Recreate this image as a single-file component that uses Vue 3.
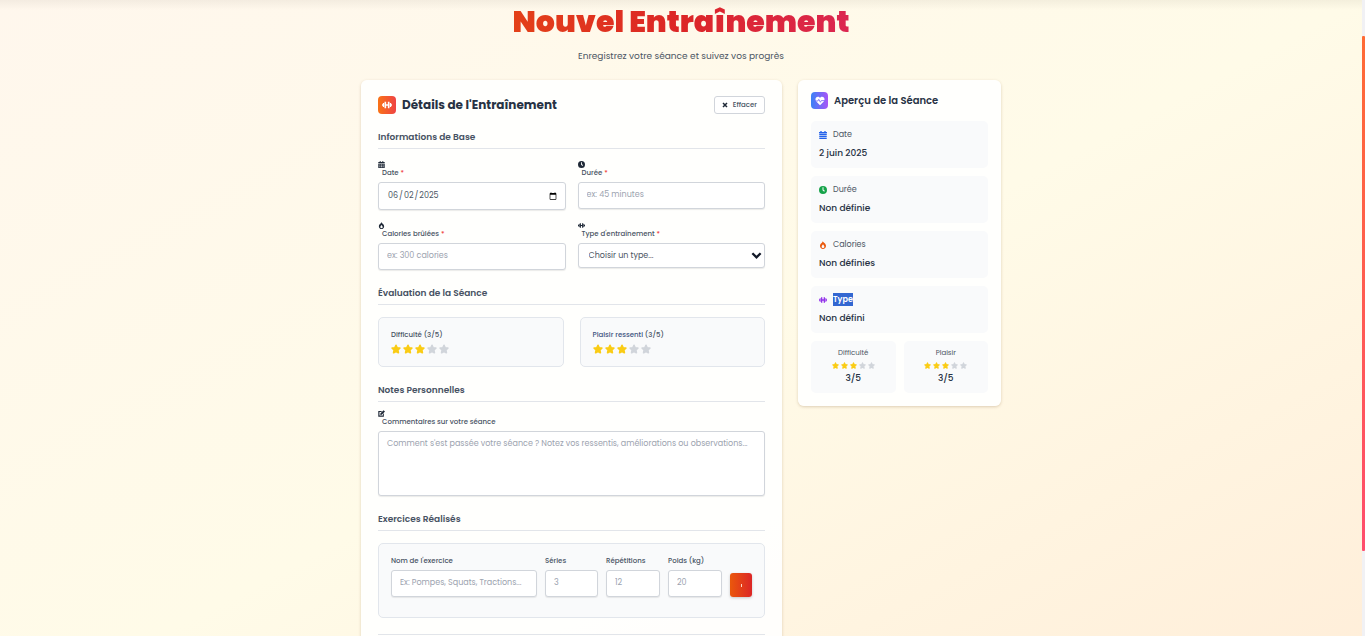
<script setup>
import { ref, computed, h } from 'vue'

const date = ref('2025-06-02')
const duration = ref('')
const calories = ref('')
const type = ref('')
const notes = ref('')
const difficulty = ref(3)
const pleasure = ref(3)
const exercise = ref({ name: '', sets: '', reps: '', weight: '' })

const shapes = {
  calendar: [
    ['path', { d: 'M6 0h3v4H6zM15 0h3v4h-3zM1 3h22v5H1z' }],
    ['path', { 'fill-rule': 'evenodd', d: 'M1 9.500h22V24H1zM5 12v3h3v-3zM10.500 12v3h3v-3zM16 12v3h3v-3zM5 18v3h3v-3zM10.500 18v3h3v-3zM16 18v3h3v-3z' }],
  ],
  agenda: [
    ['path', { d: 'M4 0h4v4H4zM16 0h4v4h-4zM0 3h24v4H0zM1 9h22v3H1zM1 15h22v3H1zM1 21h22v3H1z' }],
    ['path', { d: 'M1 6h22v17H1z', opacity: 0.4 }],
  ],
  clock: [
    ['path', { 'fill-rule': 'evenodd', d: 'M12 0a12 12 0 1 0 0 24 12 12 0 0 0 0-24zm-1.500 4h3v7l4 3-2 3-5-4z' }],
  ],
  flame: [
    ['path', { 'fill-rule': 'evenodd', d: 'M11 0c1 3 4 4 6 7 1 1 4 4 4 8 0 5-4 9-9 9s-9-4-9-9c0-4 2-7 5-9 2-2 3-3 3-6zm1 10c-2 3-4 4-4 7 0 3 2 4 4 4s4-1 4-4c0-3-2-4-4-7z' }],
  ],
  dumbbell: [
    ['path', { d: 'M0 10h2V7h3v10H2v-3H0zM6 4h4v6h4V4h4v16h-4v-6h-4v6H6zM19 7h3v3h2v4h-2v3h-3z' }],
  ],
  edit: [
    ['path', { d: 'M1 3h13l-3 4H5v12h12v-5l3-3v12H1zM8 12 19 1l5 4-11 11-5 1z' }],
  ],
  heart: [
    ['path', { d: 'M12 22 3 13C-1 8 2 2 7 2c2 0 4 1 5 3 1-2 3-3 5-3 5 0 8 6 4 11z' }],
    ['path', { d: 'M1 12h6l2-4 4 7 2-4h8', fill: 'none', stroke: '#776bf6', 'stroke-width': 2 }],
  ],
  star: [
    ['path', { d: 'm12 3 2.700 6 6.500.8-4.800 4.600 1.300 6.600L12 17.800 6.300 21l1.300-6.600-4.800-4.600L9.300 9z', stroke: 'currentColor', 'stroke-width': 4, 'stroke-linejoin': 'round' }],
  ],
  cross: [
    ['path', { d: 'M4 4l16 16M20 4 4 20', stroke: 'currentColor', 'stroke-width': 6 }],
  ],
  chevron: [
    ['path', { d: 'M3 7l9 9 9-9', fill: 'none', stroke: 'currentColor', 'stroke-width': 5 }],
  ],
}

const Icon = (props) =>
  h('svg', { viewBox: '0 0 24 24', fill: 'currentColor', 'aria-hidden': 'true' },
    shapes[props.name].map(([tag, attrs]) => h(tag, attrs)))
Icon.props = ['name']

const months = ['janvier', 'février', 'mars', 'avril', 'mai', 'juin', 'juillet', 'août', 'septembre', 'octobre', 'novembre', 'décembre']
const longDate = computed(() => {
  const [y, m, d] = date.value.split('-').map(Number)
  return y ? `${d} ${months[m - 1]} ${y}` : 'Non définie'
})

const preview = computed(() => [
  { icon: 'agenda', tone: 'blue', label: 'Date', value: longDate.value },
  { icon: 'clock', tone: 'green', label: 'Durée', value: duration.value || 'Non définie' },
  { icon: 'flame', tone: 'orange', label: 'Calories', value: calories.value || 'Non définies' },
  { icon: 'dumbbell', tone: 'purple', label: 'Type', value: type.value || 'Non défini', marked: true },
])

function clearForm() {
  duration.value = calories.value = type.value = notes.value = ''
  difficulty.value = pleasure.value = 3
}
</script>

<template>
  <div class="page">
    <main class="content">
      <header class="hero">
        <h1>Nouvel Entraînement</h1>
        <p>Enregistrez votre séance et suivez vos progrès</p>
      </header>

      <div class="columns">
        <form class="card form-card" @submit.prevent>
          <div class="form-head">
            <span class="badge badge-warm"><Icon name="dumbbell" /></span>
            <h2>Détails de l'Entraînement</h2>
            <button type="button" class="clear" @click="clearForm"><Icon name="cross" />Effacer</button>
          </div>

          <section>
            <h3>Informations de Base</h3>
            <div class="fields">
              <div class="field">
                <Icon name="calendar" class="label-icon" />
                <label for="date">Date <b>*</b></label>
                <input id="date" v-model="date" type="date" class="control date" />
              </div>
              <div class="field">
                <Icon name="clock" class="label-icon" />
                <label for="duration">Durée <b>*</b></label>
                <input id="duration" v-model="duration" type="text" class="control" placeholder="ex: 45 minutes" />
              </div>
              <div class="field">
                <Icon name="flame" class="label-icon" />
                <label for="calories">Calories brûlées <b>*</b></label>
                <input id="calories" v-model="calories" type="text" class="control" placeholder="ex: 300 calories" />
              </div>
              <div class="field">
                <Icon name="dumbbell" class="label-icon" />
                <label for="type">Type d'entraînement <b>*</b></label>
                <div class="select-wrap">
                  <select id="type" v-model="type" class="control">
                    <option value="">Choisir un type...</option>
                    <option>Cardio</option>
                    <option>Musculation</option>
                  </select>
                  <Icon name="chevron" class="chevron" />
                </div>
              </div>
            </div>
          </section>

          <section>
            <h3>Évaluation de la Séance</h3>
            <div class="ratings">
              <div class="panel rating">
                <p>Difficulté ({{ difficulty }}/5)</p>
                <div class="stars">
                  <button v-for="n in 5" :key="n" type="button" :class="{ on: n <= difficulty }" :aria-label="`Difficulté ${n}`" @click="difficulty = n"><Icon name="star" /></button>
                </div>
              </div>
              <div class="panel rating">
                <p><span class="tinted">Plaisir ressenti</span> ({{ pleasure }}/5)</p>
                <div class="stars">
                  <button v-for="n in 5" :key="n" type="button" :class="{ on: n <= pleasure }" :aria-label="`Plaisir ${n}`" @click="pleasure = n"><Icon name="star" /></button>
                </div>
              </div>
            </div>
          </section>

          <section class="notes">
            <h3>Notes Personnelles</h3>
            <div class="field">
              <Icon name="edit" class="label-icon" />
              <label for="notes">Commentaires sur votre séance</label>
              <textarea id="notes" v-model="notes" class="control" placeholder="Comment s'est passée votre séance ? Notez vos ressentis, améliorations ou observations..."></textarea>
            </div>
          </section>

          <section>
            <h3>Exercices Réalisés</h3>
            <div class="panel exercise">
              <div class="field">
                <label for="ex-name">Nom de l'exercice</label>
                <input id="ex-name" v-model="exercise.name" class="control" placeholder="Ex: Pompes, Squats, Tractions..." />
              </div>
              <div class="field">
                <label for="ex-sets">Séries</label>
                <input id="ex-sets" v-model="exercise.sets" class="control" placeholder="3" />
              </div>
              <div class="field">
                <label for="ex-reps">Répétitions</label>
                <input id="ex-reps" v-model="exercise.reps" class="control" placeholder="12" />
              </div>
              <div class="field">
                <label for="ex-weight">Poids (kg)</label>
                <input id="ex-weight" v-model="exercise.weight" class="control" placeholder="20" />
              </div>
              <button type="button" class="add" aria-label="Ajouter"><i></i></button>
            </div>
          </section>
          <hr />
        </form>

        <aside class="card preview">
          <div class="preview-head">
            <span class="badge badge-cool"><Icon name="heart" /></span>
            <h2>Aperçu de la Séance</h2>
          </div>
          <div v-for="item in preview" :key="item.label" class="tile">
            <p class="tile-label">
              <Icon :name="item.icon" :class="item.tone" />
              <mark v-if="item.marked">{{ item.label }}</mark>
              <span v-else>{{ item.label }}</span>
            </p>
            <p class="tile-value">{{ item.value }}</p>
          </div>
          <div class="scores">
            <div class="score">
              <p>Difficulté</p>
              <div class="mini"><Icon v-for="n in 5" :key="n" name="star" :class="{ on: n <= difficulty }" /></div>
              <strong>{{ difficulty }}/5</strong>
            </div>
            <div class="score">
              <p>Plaisir</p>
              <div class="mini"><Icon v-for="n in 5" :key="n" name="star" :class="{ on: n <= pleasure }" /></div>
              <strong>{{ pleasure }}/5</strong>
            </div>
          </div>
        </aside>
      </div>
    </main>
    <div class="scroll-track"><div class="scroll-thumb"></div></div>
  </div>
</template>

<style>
body { margin: 0; }
</style>

<style scoped>
* { box-sizing: border-box; }
h1, h2, h3, p { margin: 0; }
svg { display: block; flex: none; }
.page {
  display: flex;
  height: 100vh;
  overflow: hidden;
  font-family: Poppins, Inter, "Open Sans", sans-serif;
  color: #273244;
}
.content {
  flex: 1;
  min-width: 0;
  overflow: hidden;
  padding: 0 16px;
  background:
    linear-gradient(rgba(60, 50, 30, 0.06), rgba(60, 50, 30, 0)) top / 100% 10px no-repeat,
    linear-gradient(to bottom right, #fff7ed, #fffbe8 50%, #ffedd8) top / 100% 720px;
}
.hero { max-width: 640px; margin: 0 auto; padding-top: 4px; text-align: center; }
h1 {
  font-size: 30px;
  line-height: 36px;
  font-weight: 900;
  background: linear-gradient(to right, #ea580c, #dc2626 50%, #db2777);
  background-clip: text;
  color: transparent;
}
.hero p {
  margin-top: 8px;
  font-size: 9px;
  line-height: 16px;
  color: #4b5563;
}
.columns {
  display: grid;
  grid-template-columns: minmax(0, 1fr) 203px;
  align-items: start;
  gap: 16px;
  max-width: 640px;
  margin: 16px auto 0;
}
.card {
  border-radius: 6px;
  background: rgba(255, 255, 255, 0.9);
  box-shadow: 0 1px 3px rgba(120, 80, 30, 0.25);
}
.form-card { padding: 16px 17px 24px; }
.form-head, .preview-head { display: flex; align-items: center; gap: 6px; }
.badge {
  display: grid;
  place-items: center;
  width: 18px;
  height: 18px;
  border-radius: 4px;
  color: #fff;
}
.badge svg { width: 10px; height: 10px; }
.badge-warm { background: linear-gradient(to right, #f97316, #ef4444); }
.badge-cool { background: linear-gradient(to right, #3b82f6, #a855f7); }
h2 { font-weight: 700; font-size: 12px; line-height: 18px; }
.clear {
  display: flex;
  align-items: center;
  gap: 5px;
  height: 18px;
  margin-left: auto;
  padding: 0 7px;
  border: 1px solid #d1d5db;
  border-radius: 3px;
  background: #fff;
  font: 500 7px/10px Poppins, Inter, sans-serif;
  color: #475263;
}
.clear svg { width: 6px; height: 6px; color: #1f2937; }
section { margin-top: 16px; }
h3 {
  height: 19px;
  padding-bottom: 6px;
  border-bottom: 1px solid #e2e5ea;
  font-size: 9px;
  line-height: 14px;
  font-weight: 600;
  color: #475263;
}
.fields {
  display: grid;
  grid-template-columns: 1fr 1fr;
  align-items: start;
  gap: 12px;
  margin-top: 12px;
}
.label-icon { width: 7px; height: 7px; color: #1f2937; }
label {
  display: block;
  margin-left: 4px;
  font-size: 7px;
  line-height: 10px;
  font-weight: 500;
  color: #475263;
}
label b { color: #ef4444; font-weight: 500; }
.control {
  display: block;
  width: 100%;
  height: 27px;
  margin-top: 4px;
  padding: 0 8px 2px;
  border: 1px solid #d1d5db;
  border-radius: 3px;
  background: #fff;
  box-shadow: 0 1px 1px rgba(0, 0, 0, 0.08);
  font: 400 8px/12px Poppins, Inter, sans-serif;
  color: #4b5563;
  outline: none;
}
.control::placeholder { color: #9ca3af; opacity: 1; }
.date { height: 28px; padding-bottom: 0; }
.date::-webkit-calendar-picker-indicator { width: 8px; height: 8px; padding: 0; }
.select-wrap { position: relative; }
select.control { height: 25px; padding: 0 20px 0 10px; appearance: none; }
.chevron {
  position: absolute;
  right: 3px;
  top: 7px;
  width: 11px;
  height: 11px;
  color: #111827;
  pointer-events: none;
}
.ratings { display: grid; grid-template-columns: 1fr 1fr; gap: 16px; margin-top: 12px; }
.panel { border: 1px solid #e2e6ec; border-radius: 5px; background: #f9fafb; }
.rating { height: 50px; padding: 12px; }
.rating p { font-size: 7px; line-height: 10px; font-weight: 500; color: #475263; }
.rating .tinted { color: #3c5280; }
.stars { display: flex; gap: 2px; margin-top: 4px; }
.stars button { padding: 0; border: 0; background: none; color: #d1d5db; }
.stars svg { width: 10px; height: 10px; }
.stars .on, .mini .on { color: #facc15; }
.notes .field { margin-top: 8px; }
textarea.control { height: 65px; padding: 6px 8px; resize: none; overflow: hidden; }
.exercise {
  display: grid;
  grid-template-columns: minmax(0, 1fr) 53px 54px 54px 22px;
  align-items: end;
  gap: 8px;
  margin-top: 12px;
  padding: 12px 12px 20px;
}
.exercise label { margin-left: 0; }
.add {
  display: grid;
  place-items: center;
  height: 24px;
  padding: 0;
  border: 0;
  border-radius: 3px;
  background: linear-gradient(to right, #ea580c, #dc2626);
  box-shadow: 0 1px 3px rgba(0, 0, 0, 0.2);
}
.add i { width: 1px; height: 3px; background: #fbd5c5; }
hr { margin: 16px 0 0; border: 0; border-top: 1px solid #e2e5ea; }

.preview { padding: 12px 13px 13px; }
.preview-head { margin-bottom: 12px; }
.preview .badge { width: 17px; height: 17px; }
.preview h2 { font-size: 10px; line-height: 16px; font-weight: 600; }
.tile {
  height: 47px;
  margin-bottom: 8px;
  padding: 7px 8px;
  border-radius: 5px;
  background: #f9fafb;
}
.tile-label { display: flex; align-items: center; gap: 6px; font-size: 8px; line-height: 13px; color: #4b5563; }
.tile-label svg { width: 8px; height: 8px; }
.tile-label mark { background: #3367d1; color: #fff; font-weight: 600; }
.tile-value { margin-top: 5px; font-size: 9px; line-height: 14px; font-weight: 500; }
.tile-label .blue { color: #2563eb; }
.tile-label .green { color: #16a34a; }
.tile-label .orange { color: #ea580c; }
.tile-label .purple { color: #9333ea; }
.scores { display: grid; grid-template-columns: 1fr 1fr; gap: 8px; }
.score {
  display: flex;
  flex-direction: column;
  align-items: center;
  height: 52px;
  padding-top: 7px;
  border-radius: 5px;
  background: #f9fafb;
}
.score p { font-size: 7px; line-height: 10px; color: #4b5563; }
.mini { display: flex; gap: 2px; margin-top: 4px; color: #d1d5db; }
.mini svg { width: 7px; height: 7px; }
.score strong { margin-top: 2px; font-size: 9px; line-height: 14px; font-weight: 500; }
.scroll-track { width: 3px; padding-top: 36px; background: #f1f1f4; }
.scroll-thumb { height: 515px; border-radius: 1px; background: linear-gradient(#ff6b35, #ff4d6d); }
</style>
